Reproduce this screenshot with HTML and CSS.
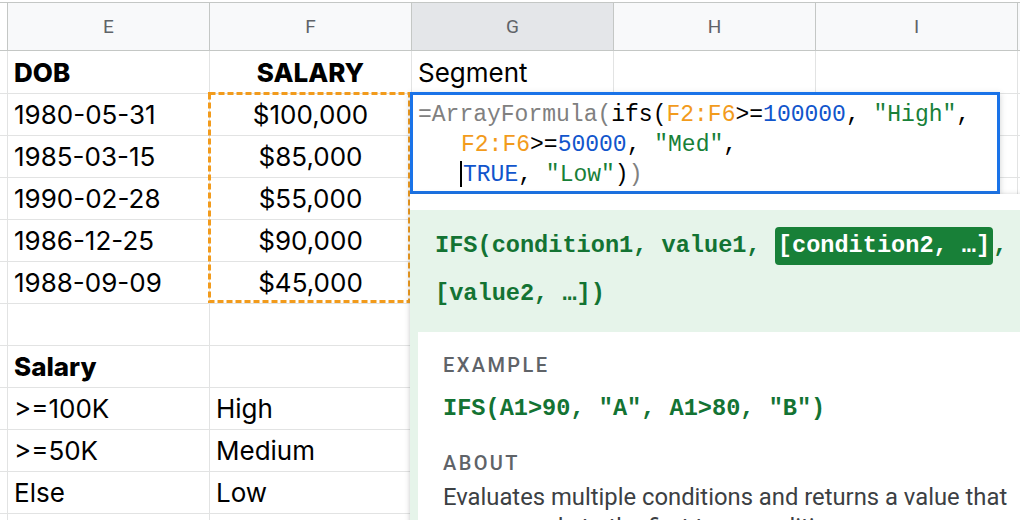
FILE: index.html
```html
<!DOCTYPE html>
<html lang="en">
<head>
<meta charset="utf-8">
<title>IFS ArrayFormula</title>
<link rel="stylesheet" href="styles.css">
</head>
<body>
<div class="sheet">
  <div class="grid">
    <div class="c stub hdr"></div>
    <div class="c hdr">E</div>
    <div class="c hdr">F</div>
    <div class="c hdr sel">G</div>
    <div class="c hdr">H</div>
    <div class="c hdr">I</div>
    <div class="c hdr"></div>

    <div class="c stub"></div><div class="c b">DOB</div><div class="c b ctr">SALARY</div><div class="c">Segment</div><div class="c"></div><div class="c"></div><div class="c"></div>
    <div class="c stub"></div><div class="c">1980-05-31</div><div class="c ctr">$100,000</div><div class="c"></div><div class="c"></div><div class="c"></div><div class="c"></div>
    <div class="c stub"></div><div class="c">1985-03-15</div><div class="c ctr">$85,000</div><div class="c"></div><div class="c"></div><div class="c"></div><div class="c"></div>
    <div class="c stub"></div><div class="c">1990-02-28</div><div class="c ctr">$55,000</div><div class="c"></div><div class="c"></div><div class="c"></div><div class="c"></div>
    <div class="c stub"></div><div class="c">1986-12-25</div><div class="c ctr">$90,000</div><div class="c"></div><div class="c"></div><div class="c"></div><div class="c"></div>
    <div class="c stub"></div><div class="c">1988-09-09</div><div class="c ctr">$45,000</div><div class="c"></div><div class="c"></div><div class="c"></div><div class="c"></div>
    <div class="c stub"></div><div class="c"></div><div class="c"></div><div class="c"></div><div class="c"></div><div class="c"></div><div class="c"></div>
    <div class="c stub"></div><div class="c b">Salary</div><div class="c"></div><div class="c"></div><div class="c"></div><div class="c"></div><div class="c"></div>
    <div class="c stub"></div><div class="c">&gt;=100K</div><div class="c">High</div><div class="c"></div><div class="c"></div><div class="c"></div><div class="c"></div>
    <div class="c stub"></div><div class="c">&gt;=50K</div><div class="c">Medium</div><div class="c"></div><div class="c"></div><div class="c"></div><div class="c"></div>
    <div class="c stub"></div><div class="c">Else</div><div class="c">Low</div><div class="c"></div><div class="c"></div><div class="c"></div><div class="c"></div>
    <div class="c stub"></div><div class="c"></div><div class="c"></div><div class="c"></div><div class="c"></div><div class="c"></div><div class="c"></div>
  </div>

  <div class="marquee">
    <svg width="203" height="211" viewBox="0 0 203 211"><rect x="1.5" y="1.5" width="200" height="208" fill="none" stroke="#f29b1c" stroke-width="3" stroke-dasharray="6 3"/></svg>
  </div>

  <div class="editor">
    <div class="fl"><span class="fg">=ArrayFormula(</span>ifs(<span class="fo">F2:F6</span>&gt;=<span class="fb">100000</span>, <span class="fs">"High"</span>,</div>
    <div class="fl ind"><span class="fo">F2:F6</span>&gt;=<span class="fb">50000</span>, <span class="fs">"Med"</span>,</div>
    <div class="fl ind"><span class="caret"></span><span class="fb">TRUE</span>, <span class="fs">"Low"</span>)<span class="fg">)</span></div>
  </div>

  <div class="tip">
    <div class="tip-inner">
      <div class="tip-head">IFS(condition1, value1, <span class="chip">[condition2, …]</span>,<br>[value2, …])</div>
      <div class="tip-body">
        <div class="lbl">EXAMPLE</div>
        <div class="code">IFS(A1&gt;90, "A", A1&gt;80, "B")</div>
        <div class="lbl about">ABOUT</div>
        <div class="desc">Evaluates multiple conditions and returns a value that corresponds to the first true condition.</div>
      </div>
    </div>
  </div>
</div>
</body>
</html>
```

FILE: styles.css
```css
html, body {
  margin: 0;
  padding: 0;
  width: 1020px;
  height: 520px;
  overflow: hidden;
  background: #fff;
}

.sheet {
  position: relative;
  padding-top: 2px;
  height: 518px;
  overflow: hidden;
  font-family: Inter, "Open Sans", sans-serif;
  color: #000;
}

.grid {
  display: grid;
  grid-template-columns: 8px repeat(5, 202px) 1fr;
  grid-template-rows: 48px 43px repeat(11, 42px);
  border-top: 1px solid #c4c7c5;
}

.c {
  box-sizing: border-box;
  border-right: 1px solid #e2e3e3;
  border-bottom: 1px solid #e2e3e3;
  padding-left: 6px;
  display: flex;
  align-items: center;
  font-size: 26px;
  white-space: nowrap;
  overflow: hidden;
}

.c.stub {
  padding: 0;
}

.c.hdr {
  background: #f8f9fa;
  border-color: #c4c7c5;
  justify-content: center;
  padding: 0;
  font-family: Roboto, sans-serif;
  font-size: 19px;
  color: #5f6368;
}

.c.hdr.stub {
  background: #fff;
  border-right-color: #c4c7c5;
}

.c.hdr.sel {
  background: #e4e6e9;
}

.c.b {
  font-weight: 800;
}

.c.ctr {
  justify-content: center;
  padding-left: 0;
}

.marquee {
  position: absolute;
  left: 208px;
  top: 92px;
  width: 203px;
  height: 211px;
}

.marquee svg {
  display: block;
}

.editor {
  position: absolute;
  left: 410px;
  top: 92px;
  width: 590px;
  height: 102px;
  box-sizing: border-box;
  border: 3px solid #1a73e8;
  background: #fff;
  padding: 5px 0 0 5px;
  box-shadow: 0 2px 6px rgba(60, 64, 67, 0.25);
  font-family: "Liberation Mono", "DejaVu Sans Mono", monospace;
  font-size: 23px;
  line-height: 30px;
  color: #000;
}

.fl {
  white-space: pre;
  height: 30px;
}

.fl.ind {
  padding-left: 43px;
}

.fg { color: #808080; }
.fo { color: #f29b1c; }
.fb { color: #1155cc; }
.fs { color: #188038; }

.caret {
  display: inline-block;
  width: 2px;
  height: 26px;
  margin-left: -1px;
  margin-right: 1px;
  background: #000;
  vertical-align: -6px;
}

.tip {
  position: absolute;
  left: 410px;
  top: 194px;
  width: 680px;
  height: 340px;
  background: #fff;
  padding-top: 16px;
  box-shadow: 0 1px 5px rgba(60, 64, 67, 0.3);
}

.tip-inner {
  background: #e6f4ea;
  height: 100%;
}

.tip-head {
  padding: 12px 0 14px 25px;
  font-family: "Liberation Mono", "DejaVu Sans Mono", monospace;
  font-weight: 700;
  font-size: 23.6px;
  line-height: 48px;
  color: #137333;
  white-space: nowrap;
}

.chip {
  display: inline-block;
  background: #188038;
  color: #fff;
  border-radius: 4px;
  padding: 0 3px;
  line-height: 38px;
}

.tip-body {
  margin-left: 8px;
  background: #fff;
  padding: 19px 0 0 25px;
  height: 300px;
}

.lbl {
  font-family: Roboto, sans-serif;
  font-weight: 500;
  font-size: 20px;
  letter-spacing: 2.4px;
  line-height: 28px;
  color: #5f6368;
}

.code {
  margin-top: 14px;
  font-family: "Liberation Mono", "DejaVu Sans Mono", monospace;
  font-weight: 700;
  font-size: 23.6px;
  line-height: 32px;
  color: #137333;
}

.lbl.about {
  margin-top: 24px;
}

.desc {
  margin-top: 5px;
  width: 590px;
  font-family: Roboto, sans-serif;
  font-size: 23.8px;
  line-height: 30px;
  color: #3c4043;
}
```
